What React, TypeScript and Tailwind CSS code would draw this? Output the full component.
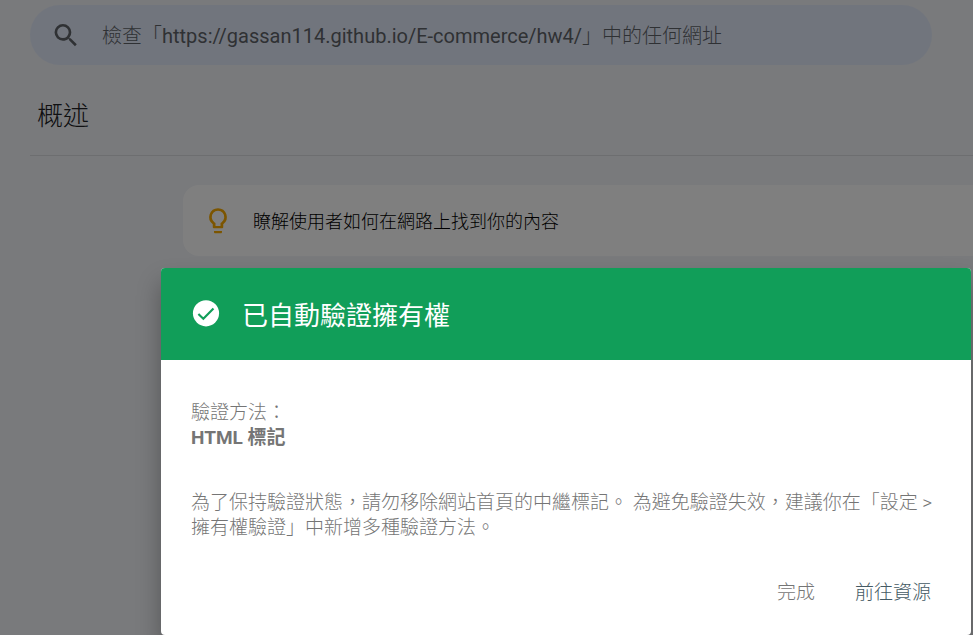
function SearchIcon() {
  return (
    <svg viewBox="0 0 24 24" className="size-8 shrink-0" fill="#5f6368" aria-hidden="true">
      <path d="M15.5 14.500h-.79l-.28-.27A6.300 6.300 0 0 0 16 10 6.300 6.300 0 1 0 9.700 16.300c1.610 0 3-.59 4.140-1.570l.27.28v.79l4.600 4.600 1.390-1.390-4.600-4.510zm-5.800-.200a4.300 4.300 0 1 1 0-8.600 4.300 4.300 0 0 1 0 8.600z" />
    </svg>
  );
}

function BulbIcon() {
  return (
    <svg viewBox="0 0 24 24" className="size-[30px] shrink-0" fill="#f9ab00" aria-hidden="true">
      <path d="M8.800 20h6.400v.8c0 .6-.4 1-1 1H9.800c-.6 0-1-.4-1-1z" />
      <path fillRule="evenodd" d="M12 1.700a7.200 7.200 0 0 0-4.200 12.950V17c0 .5.3.8.8.8h6.800c.5 0 .8-.3.8-.8v-2.350A7.200 7.200 0 0 0 12 1.700zm2.900 11.200l-.9.700V16h-4v-2.400l-.9-.7a5 5 0 1 1 5.800 0z" />
    </svg>
  );
}

function CheckIcon() {
  return (
    <svg viewBox="0 0 24 24" className="size-8 shrink-0" aria-hidden="true">
      <circle cx="12" cy="11.500" r="9.800" fill="#fff" />
      <path d="M6.300 12l3.700 3.600 7.600-7.800" fill="none" stroke="#119e59" strokeWidth="1.600" />
    </svg>
  );
}

export default function App() {
  return (
    <div className="relative min-h-screen overflow-hidden bg-[#f2f4f8] font-['Roboto','Noto_Sans_CJK_TC',sans-serif]">
      <main className="pt-[5px] pl-[30px]">
        <label className="mr-[41px] flex h-[60px] items-center gap-5 rounded-full bg-[#e3ebfb] pr-6 pl-5">
          <SearchIcon />
          <input
            type="search"
            aria-label="網址檢查"
            placeholder="檢查「https://gassan114.github.io/E-commerce/hw4/」中的任何網址"
            className="min-w-0 flex-1 bg-transparent pt-0.5 font-['Roboto','Noto_Sans_CJK_TC_Light','Noto_Sans_CJK_TC',sans-serif] text-[20px] outline-none placeholder:text-[#5f6368]"
          />
        </label>
        <h1 className="flex h-[91px] items-center border-b border-[#dadce0] pt-3 pl-[7px] text-[26px] font-light text-[#202124]">
          概述
        </h1>
        <section className="mt-[29px] ml-[153px] flex h-[71px] items-center gap-5 rounded-l-2xl bg-white pl-5">
          <BulbIcon />
          <p className="pt-0.5 text-[18px] font-light text-black">瞭解使用者如何在網路上找到你的內容</p>
        </section>
      </main>

      <div className="absolute inset-0 bg-black/50 pt-[268px] pr-[2px] pl-[161px]">
        <div
          role="dialog"
          aria-labelledby="dialog-title"
          className="overflow-hidden rounded bg-white text-[19px] leading-[25px] font-light text-[#757575] shadow-[0_15px_24px_rgba(0,0,0,0.3)]"
        >
          <header className="flex h-[92px] items-center gap-5 bg-[#119e59] pl-[29px] text-white">
            <CheckIcon />
            <h2 id="dialog-title" className="pt-1 text-[26px] leading-8 font-normal">
              已自動驗證擁有權
            </h2>
          </header>
          <div className="px-[30px] pt-10">
            <p>驗證方法：</p>
            <p className="font-bold">HTML 標記</p>
            <p className="mt-10">
              為了保持驗證狀態，請勿移除網站首頁的中繼標記。 為避免驗證失效，建議你在「設定 &gt;
              擁有權驗證」中新增多種驗證方法。
            </p>
          </div>
          <footer className="flex justify-end gap-10 pt-10 pr-10 pb-[30px]">
            <button type="button">完成</button>
            <button type="button" className="text-[#455a64]">前往資源</button>
          </footer>
        </div>
      </div>
    </div>
  );
}
